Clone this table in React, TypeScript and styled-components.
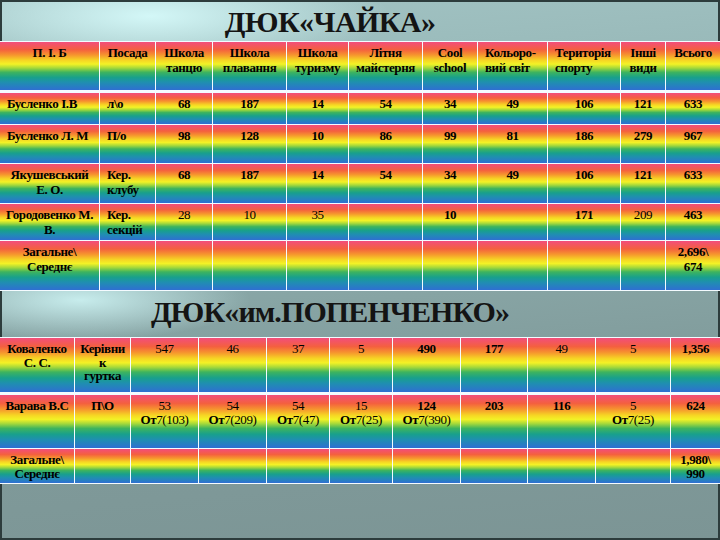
import React from "react";
import styled, { createGlobalStyle } from "styled-components";

type CellData = { t?: React.ReactNode; left?: boolean; light?: boolean };

const c = (t: React.ReactNode, opts: Partial<CellData> = {}): CellData => ({ t, ...opts });
const L = (t: React.ReactNode) => c(t, { left: true });
const n = (t: React.ReactNode) => c(t, { light: true });
const e: CellData = { t: "" };

const Ot = ({ v }: { v: string }) => (
  <span>
    <b>От</b>7({v})
  </span>
);

const chaikaHead: CellData[] = [
  c("П. І. Б"),
  c("Посада"),
  c("Школа\nтанцю"),
  c("Школа\nплавання"),
  c("Школа\nтуризму"),
  c("Літня\nмайстерня"),
  c("Cool\nschool"),
  L("Кольоро-\nвий світ"),
  L("Територія\nспорту"),
  c("Інші\nвиди"),
  c("Всього"),
];

const chaikaRows: CellData[][] = [
  [L("Бусленко І.В"), L("л\\о"), c("68"), c("187"), c("14"), c("54"), c("34"), c("49"), c("106"), c("121"), c("633")],
  [L("Бусленко Л. М"), L("П/о"), c("98"), c("128"), c("10"), c("86"), c("99"), c("81"), c("186"), c("279"), c("967")],
  [c("Якушевський\nЕ. О."), L("Кер.\nклубу"), c("68"), c("187"), c("14"), c("54"), c("34"), c("49"), c("106"), c("121"), c("633")],
  [c("Городовенко М.\nВ."), L("Кер.\nсекцій"), n("28"), n("10"), n("35"), e, c("10"), e, c("171"), n("209"), c("463")],
  [c("Загальне\\\nСереднє"), e, e, e, e, e, e, e, e, e, c("2,696\\\n674")],
];

const popenRows: CellData[][] = [
  [c("Коваленко\nС. С."), c("Керівни\nк\nгуртка"), n("547"), n("46"), n("37"), n("5"), c("490"), c("177"), n("49"), n("5"), c("1,356")],
  [
    c("Варава В.С"),
    c("П\\О"),
    n(<>53{"\n"}<Ot v="103" /></>),
    n(<>54{"\n"}<Ot v="209" /></>),
    n(<>54{"\n"}<Ot v="47" /></>),
    n(<>15{"\n"}<Ot v="25" /></>),
    n(<><b>124</b>{"\n"}<Ot v="390" /></>),
    c("203"),
    c("116"),
    n(<>5{"\n"}<Ot v="25" /></>),
    c("624"),
  ],
  [c("Загальне\\\nСереднє"), e, e, e, e, e, e, e, e, e, c("1,980\\\n990")],
];

export default function App() {
  return (
    <>
      <GlobalStyle />
      <Slide>
        <TitleBand $top={5} $height={41}>
          <Title>ДЮК«ЧАЙКА»</Title>
        </TitleBand>
        <TableGrid
          $cols="99px 55px 56px 73px 61px 73px 54px 69px 72px 44px 54px"
          $rows="50px 31px 38px 39px 36px 49px"
        >
          {chaikaHead.map((cell, i) => (
            <Cell key={`h${i}`} $left={cell.left} $head>
              {cell.t}
            </Cell>
          ))}
          {chaikaRows.map((row, r) =>
            row.map((cell, i) => (
              <Cell key={`${r}-${i}`} $left={cell.left} $light={cell.light}>
                {cell.t}
              </Cell>
            ))
          )}
        </TableGrid>
        <TitleBand $top={4} $height={46}>
          <Title $tight>ДЮК«им.ПОПЕНЧЕНКО»</Title>
        </TitleBand>
        <TableGrid
          $cols="74px 55px 67px 67px 62px 62px 67px 66px 67px 74px 49px"
          $rows="56px 53px 34px"
        >
          {popenRows.map((row, r) =>
            row.map((cell, i) => (
              <Cell
                key={`${r}-${i}`}
                $left={cell.left}
                $light={cell.light}
                $head={r === 0}
                $tight
              >
                {cell.t}
              </Cell>
            ))
          )}
        </TableGrid>
      </Slide>
    </>
  );
}

const GlobalStyle = createGlobalStyle`
  html, body {
    margin: 0;
    padding: 0;
    background: #7b9696;
  }
  body {
    font-family: "Liberation Serif", "Times New Roman", serif;
    color: #000000;
  }
`;

const Slide = styled.div`
  width: 720px;
  height: 540px;
  overflow: hidden;
  display: flex;
  flex-direction: column;
  background:
    radial-gradient(ellipse 240px 55px at 150px 16px, rgba(214, 250, 250, 0.95), rgba(214, 250, 250, 0) 100%),
    radial-gradient(ellipse 170px 40px at 80px 300px, rgba(206, 244, 244, 0.9), rgba(206, 244, 244, 0) 100%),
    linear-gradient(175deg, #a2c4c4 0%, #8eadad 40%, #809b9b 70%, #7c9595 100%);
  box-shadow: inset 0 0 0 2px #2d3c3c;
`;

const TitleBand = styled.div<{ $top: number; $height: number }>`
  height: ${(p) => p.$height}px;
  box-sizing: border-box;
  padding: ${(p) => p.$top}px 60px 0 0;
  text-align: center;
  flex: none;
`;

const Title = styled.div<{ $tight?: boolean }>`
  font-size: 30px;
  line-height: 34px;
  font-weight: bold;
  color: #141414;
  letter-spacing: ${(p) => (p.$tight ? "-0.9px" : "-0.6px")};
  white-space: nowrap;
`;

const TableGrid = styled.div<{ $cols: string; $rows: string }>`
  flex: none;
  display: grid;
  grid-template-columns: ${(p) => p.$cols};
  grid-template-rows: ${(p) => p.$rows};
  gap: 1px;
  background: #f4fbff;
  border-top: 1px solid #f4fbff;
  border-bottom: 1px solid #f4fbff;
`;

const Cell = styled.div<{ $left?: boolean; $light?: boolean; $head?: boolean; $tight?: boolean }>`
  box-sizing: border-box;
  margin-bottom: ${(p) => (p.$head ? 2 : 0)}px;
  padding: ${(p) => (p.$tight ? "4px 2px 0" : "4px 3px 0")};
  ${(p) => (p.$left ? "padding-left: 7px;" : "")}
  text-align: ${(p) => (p.$left ? "left" : "center")};
  white-space: pre-line;
  font-size: 13px;
  letter-spacing: -0.4px;
  line-height: ${(p) => (p.$tight ? "13.5px" : "14.5px")};
  font-weight: ${(p) => (p.$light ? "normal" : "bold")};
  color: #000000;
  overflow: hidden;
  background: linear-gradient(
    to bottom,
    #f24e7c 0%,
    #f4603f 16%,
    #f6952e 27%,
    #f6d524 38%,
    #f3f226 46%,
    #a6d93a 54%,
    #3eb45e 63%,
    #18a08c 74%,
    #1f8fb0 84%,
    #2f6fd2 100%
  );
`;
